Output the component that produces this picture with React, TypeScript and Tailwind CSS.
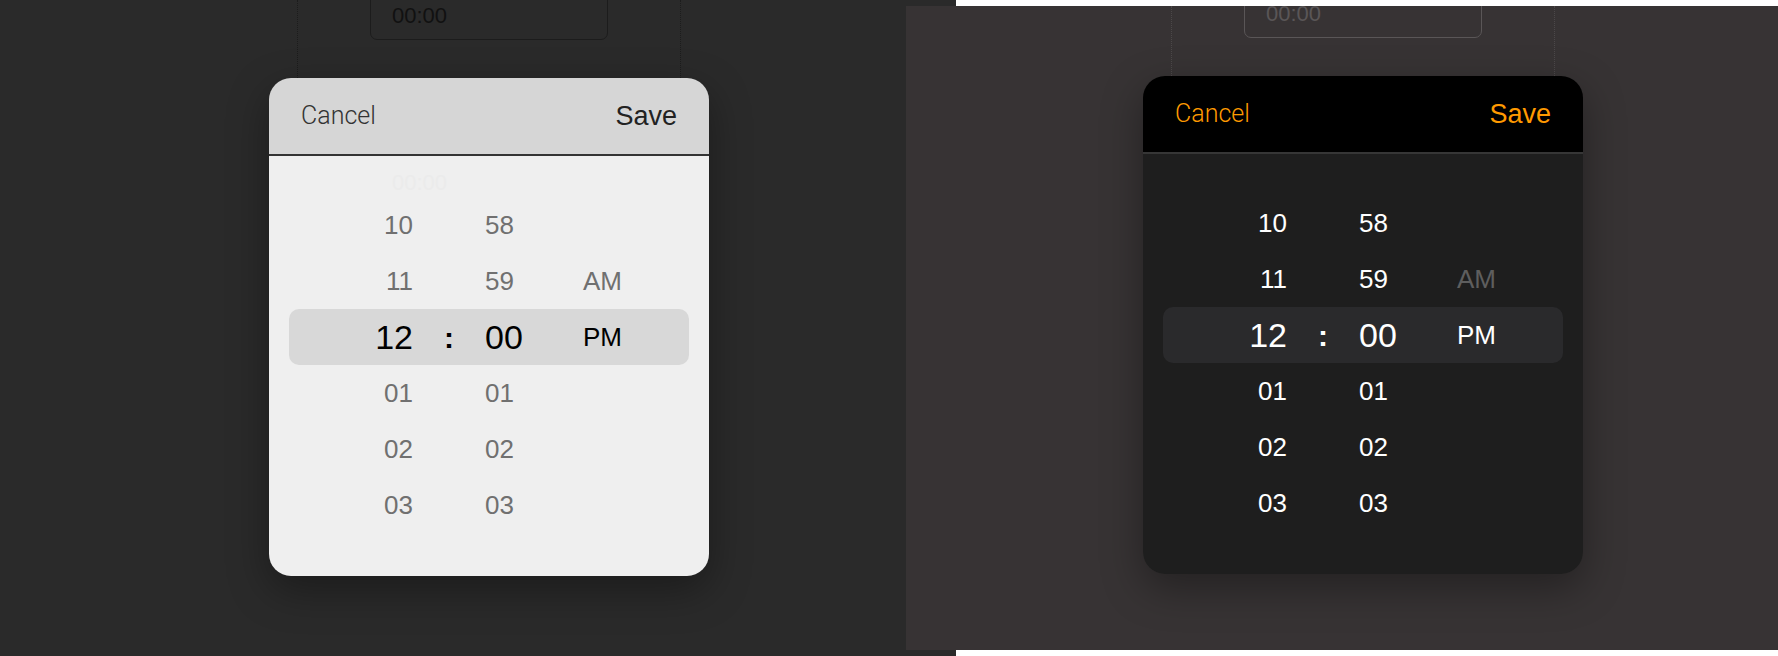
type Theme = {
  headerBg: string;
  divider: string;
  bodyBg: string;
  highlight: string;
  cancel: string;
  save: string;
  muted: string;
  selected: string;
  ampmMuted: string;
  dots: string;
  inputBorder: string;
  inputText: string;
  ghost: string;
};

const light: Theme = {
  headerBg: "bg-[#d6d6d6]",
  divider: "border-[#333333]",
  bodyBg: "bg-[#efefef]",
  highlight: "bg-[#d8d8d8]",
  cancel: "text-[#333333]",
  save: "text-[#222222]",
  muted: "text-[#707070]",
  selected: "text-black",
  ampmMuted: "text-[#707070]",
  dots: "border-[#1c1c1c]",
  inputBorder: "border-[#1c1c1c]",
  inputText: "text-[#111111]",
  ghost: "text-[#ebebeb]",
};

const dark: Theme = {
  headerBg: "bg-black",
  divider: "border-[#363636]",
  bodyBg: "bg-[#1e1e1e]",
  highlight: "bg-[#2a2a2c]",
  cancel: "text-[#ff9a00]",
  save: "text-[#ff9a00]",
  muted: "text-white",
  selected: "text-white",
  ampmMuted: "text-[#5e5e5e]",
  dots: "border-[#4c4849]",
  inputBorder: "border-[#5a5657]",
  inputText: "text-[#5a5657]",
  ghost: "text-[#1e1e1e]",
};

const rows = [
  { h: "10", m: "58", ap: "" },
  { h: "11", m: "59", ap: "AM" },
  { h: "12", m: "00", ap: "PM", active: true },
  { h: "01", m: "01", ap: "" },
  { h: "02", m: "02", ap: "" },
  { h: "03", m: "03", ap: "" },
];

function Picker({ theme, frameHeight, inputShift }: { theme: Theme; frameHeight: string; inputShift: string }) {
  return (
    <div className="flex w-[440px] flex-col">
      <div className={`mx-auto flex w-[384px] flex-col border-x border-dotted ${theme.dots} ${frameHeight}`}>
        <div
          className={`mx-auto flex h-[50px] w-[238px] shrink-0 items-center rounded-[7px] border pl-[21px] text-[22px] ${theme.inputBorder} ${theme.inputText} ${inputShift}`}
        >
          00:00
        </div>
      </div>
      <div className="overflow-hidden rounded-[22px] shadow-[0_14px_40px_rgba(0,0,0,0.35)]">
        <div className={`flex h-[78px] items-center justify-between border-b-2 px-8 ${theme.headerBg} ${theme.divider}`}>
          <span className={`font-['Roboto',sans-serif] text-[25px] font-light ${theme.cancel}`}>Cancel</span>
          <span className={`text-[27px] ${theme.save}`}>Save</span>
        </div>
        <div className={`flex h-[420px] flex-col ${theme.bodyBg}`}>
          <div className={`h-[41px] pl-[123px] pt-[14px] text-[22px] leading-[26px] ${theme.ghost}`}>00:00</div>
          {rows.map((r) => (
            <div
              key={r.h}
              className={`mx-5 flex h-[56px] items-center rounded-[10px] ${r.active ? theme.highlight : ""}`}
            >
              <span
                className={`w-[124px] text-right ${r.active ? `text-[34px] ${theme.selected}` : `text-[26px] ${theme.muted}`}`}
              >
                {r.h}
              </span>
              <span className={`w-[72px] text-center text-[30px] font-bold ${theme.selected}`}>
                {r.active ? ":" : ""}
              </span>
              <span
                className={`w-[98px] ${r.active ? `text-[34px] ${theme.selected}` : `text-[26px] ${theme.muted}`}`}
              >
                {r.m}
              </span>
              <span className={`text-[26px] ${r.active ? theme.selected : theme.ampmMuted}`}>{r.ap}</span>
            </div>
          ))}
        </div>
      </div>
    </div>
  );
}

export default function App() {
  return (
    <div className="flex h-[656px] w-[1778px] overflow-hidden bg-white font-['Liberation_Sans',Arial,sans-serif]">
      <div className="h-[656px] w-[956px] shrink-0 overflow-hidden bg-[#2a2a2a] pl-[269px]">
        <Picker theme={light} frameHeight="h-[78px]" inputShift="-mt-[10px]" />
      </div>
      <div className="my-[6px] -ml-[50px] flex-1 overflow-hidden bg-[#373334] pl-[237px]">
        <Picker theme={dark} frameHeight="h-[70px]" inputShift="-mt-[18px]" />
      </div>
    </div>
  );
}
